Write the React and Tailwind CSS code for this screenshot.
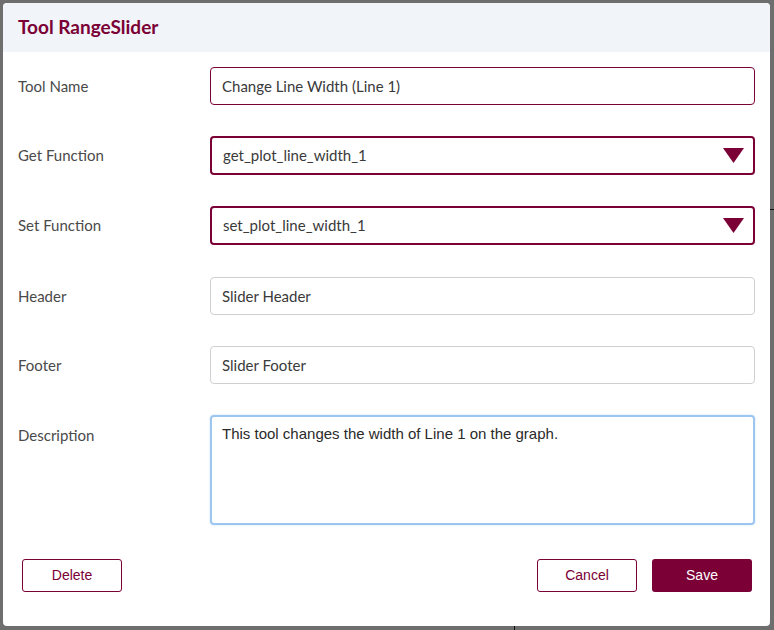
import { useState } from "react";

const maroon = "#7a0036";

function Row({ label, children, top }) {
  return (
    <div className={`flex ${top ? "items-start" : "items-center"}`}>
      <div
        className={`w-[192px] shrink-0 text-[15px] text-[#4a4a4a] ${top ? "pt-[9px]" : ""}`}
      >
        {label}
      </div>
      <div className="flex-1">{children}</div>
    </div>
  );
}

function Select({ value }) {
  return (
    <div className="flex h-[39px] items-center justify-between rounded-[4px] border-2 border-[#7a0036] bg-white pl-[11px] pr-[9px]">
      <span className="text-[15px] text-[#3a3a3a]">{value}</span>
      <svg width="21" height="15" viewBox="0 0 21 15">
        <path d="M0 0 L21 0 L10.5 15 Z" fill={maroon} />
      </svg>
    </div>
  );
}

export default function App() {
  const [name, setName] = useState("Change Line Width (Line 1)");
  const [header, setHeader] = useState("Slider Header");
  const [footer, setFooter] = useState("Slider Footer");
  const [desc, setDesc] = useState(
    "This tool changes the width of Line 1 on the graph.",
  );

  return (
    <div
      className="relative h-[630px] w-[774px] overflow-hidden bg-[#6e6e6e] pl-[3px] pt-[3px]"
      style={{ fontFamily: "Lato, 'Noto Sans', sans-serif" }}
    >
      {/* background edges peeking out */}
      <div className="absolute bottom-0 left-[514px] h-[4px] w-px bg-[#111]" />
      <div className="absolute right-0 top-[209px] h-px w-[4px] bg-[#111]" />

      <div className="flex h-[623px] w-[767px] flex-col overflow-hidden rounded-[4px] bg-white">
        {/* Header */}
        <div className="flex h-[49px] shrink-0 items-center bg-[#f1f4f8] pl-[15px]">
          <h1 className="text-[19px] font-bold text-[#7a0036]">
            Tool RangeSlider
          </h1>
        </div>

        {/* Form */}
        <div className="flex flex-col pl-[15px] pr-[15px] pt-[15px]">
          <Row label="Tool Name">
            <input
              value={name}
              onChange={(e) => setName(e.target.value)}
              className="h-[38px] w-full rounded-[4px] border border-[#7a0036] px-[11px] text-[15px] text-[#3a3a3a] outline-none"
            />
          </Row>
          <div className="h-[31px]" />
          <Row label="Get Function">
            <Select value="get_plot_line_width_1" />
          </Row>
          <div className="h-[31px]" />
          <Row label="Set Function">
            <Select value="set_plot_line_width_1" />
          </Row>
          <div className="h-[32px]" />
          <Row label="Header">
            <input
              value={header}
              onChange={(e) => setHeader(e.target.value)}
              className="h-[38px] w-full rounded-[4px] border border-[#cfcfcf] px-[11px] text-[15px] text-[#3a3a3a] outline-none"
            />
          </Row>
          <div className="h-[31px]" />
          <Row label="Footer">
            <input
              value={footer}
              onChange={(e) => setFooter(e.target.value)}
              className="h-[38px] w-full rounded-[4px] border border-[#cfcfcf] px-[11px] text-[15px] text-[#3a3a3a] outline-none"
            />
          </Row>
          <div className="h-[31px]" />
          <Row label="Description" top>
            <textarea
              value={desc}
              onChange={(e) => setDesc(e.target.value)}
              className="block h-[110px] w-full resize-none rounded-[4px] border-2 border-[#9cc6f0] px-[10px] pt-[6px] text-[15px] text-[#2a2a2a] shadow-[0_0_2px_#b9d8f6] outline-none"
              style={{ fontFamily: "'Liberation Sans', Arial, sans-serif" }}
            />
          </Row>
        </div>

        {/* Footer buttons */}
        <div
          className="mt-[34px] flex items-center justify-between pl-[19px] pr-[18px]"
          style={{ fontFamily: "'Liberation Sans', Arial, sans-serif" }}
        >
          <button className="h-[33px] w-[100px] rounded-[3px] border border-[#7a0036] bg-white text-[14px] text-[#7a0036]">
            Delete
          </button>
          <div className="flex gap-[15px]">
            <button className="h-[33px] w-[100px] rounded-[3px] border border-[#7a0036] bg-white text-[14px] text-[#7a0036]">
              Cancel
            </button>
            <button className="h-[33px] w-[100px] rounded-[3px] bg-[#7a0036] text-[14px] text-white">
              Save
            </button>
          </div>
        </div>
      </div>
    </div>
  );
}
